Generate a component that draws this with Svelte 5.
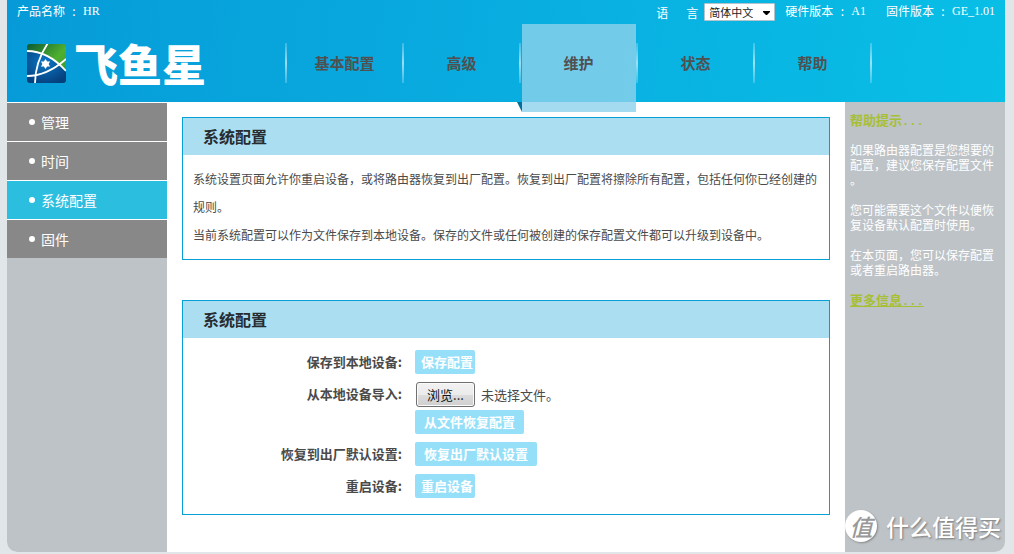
<script>
  let language = $state('zh-CN');
  let fileName = $state('');
  let fileInput;

  const nav = ['基本配置', '高级', '维护', '状态', '帮助'];
  const activeNav = '维护';
  const menu = ['管理', '时间', '系统配置', '固件'];
  const activeMenu = '系统配置';
  const help = [
    '如果路由器配置是您想要的配置，建议您保存配置文件。',
    '您可能需要这个文件以便恢复设备默认配置时使用。',
    '在本页面，您可以保存配置或者重启路由器。'
  ];

  function onFile(event) {
    fileName = event.currentTarget.files[0]?.name ?? '';
  }
</script>

{#snippet info(name, value)}
  <span class="info"><span>{name}</span><span class="colon">:</span><span class="latin">{value}</span></span>
{/snippet}

<div class="page">
  <header>
    <div class="top">
      {@render info('产品名称', 'HR')}
      <div class="top-right">
        <label class="lang" for="language"><span>语</span><span>言</span></label>
        <span class="select-wrap">
          <select id="language" bind:value={language}>
            <option value="zh-CN">简体中文</option>
            <option value="en">English</option>
          </select>
          <svg class="arrow" viewBox="0 0 7 4" aria-hidden="true"><path d="M0 0h7v1L4 4H3L0 1z" /></svg>
        </span>
        <div class="versions">
          {@render info('硬件版本', 'A1')}
          {@render info('固件版本', 'GE_1.01')}
        </div>
      </div>
    </div>
    <div class="bar">
      <a class="logo" href="#home">
        <svg viewBox="0 0 39 39" aria-hidden="true">
          <defs>
            <clipPath id="tile"><rect width="39" height="39" rx="3" /></clipPath>
            <linearGradient id="green" x1="0" y1="0" x2="1" y2="1">
              <stop offset="0" stop-color="#0c5a32" />
              <stop offset=".55" stop-color="#4fb02f" />
              <stop offset="1" stop-color="#2f8f35" />
            </linearGradient>
            <radialGradient id="blue" cx=".45" cy=".35" r=".7">
              <stop offset="0" stop-color="#0c78c4" />
              <stop offset="1" stop-color="#063f7d" />
            </radialGradient>
          </defs>
          <g clip-path="url(#tile)">
            <rect width="39" height="39" fill="url(#green)" />
            <path d="M0 7Q20 7 32 20L39 27V39H0z" fill="url(#blue)" />
            <path d="M0 7Q21 7 39 27M0 32Q20 32 39 15M21-1Q8 18 8 40" fill="none" stroke="#fff" stroke-width="1.8" />
            <path d="m18.500 15 1.600 2.500h3l-1.500 2.500 1.500 2.500h-3L18.500 25l-1.600-2.500h-3l1.500-2.500-1.500-2.500h3z" fill="#fff" />
          </g>
        </svg>
        <span>飞鱼星</span>
      </a>
      <nav>
        {#each nav as item}
          <a href="#{item}" class:active={item === activeNav}>{item}</a>
        {/each}
      </nav>
    </div>
  </header>

  <div class="columns">
    <aside class="side">
      <ul>
        {#each menu as item}
          <li><a href="#{item}" class:active={item === activeMenu}>{item}</a></li>
        {/each}
      </ul>
    </aside>

    <main>
      <section>
        <h2>系统配置</h2>
        <div class="text">
          <p>系统设置页面允许你重启设备，或将路由器恢复到出厂配置。恢复到出厂配置将擦除所有配置，包括任何你已经创建的规则。</p>
          <p>当前系统配置可以作为文件保存到本地设备。保存的文件或任何被创建的保存配置文件都可以升级到设备中。</p>
        </div>
      </section>

      <section>
        <h2>系统配置</h2>
        <form onsubmit={(e) => e.preventDefault()}>
          <label for="save">保存到本地设备:</label>
          <div><button id="save" type="button" class="action short">保存配置</button></div>
          <label for="browse">从本地设备导入:</label>
          <div class="stack">
            <div class="file">
              <button id="browse" type="button" class="browse" onclick={() => fileInput.click()}>浏览...</button>
              <span>{fileName || '未选择文件。'}</span>
              <input type="file" hidden bind:this={fileInput} onchange={onFile} />
            </div>
            <button type="submit" class="action">从文件恢复配置</button>
          </div>
          <label for="reset">恢复到出厂默认设置:</label>
          <div><button id="reset" type="button" class="action">恢复出厂默认设置</button></div>
          <label for="reboot">重启设备:</label>
          <div><button id="reboot" type="button" class="action short">重启设备</button></div>
        </form>
      </section>
    </main>

    <aside class="help">
      <h3>帮助提示<span class="dots">...</span></h3>
      {#each help as line}
        <p>{line}</p>
      {/each}
      <a href="#more">更多信息<span class="dots">...</span></a>
    </aside>
  </div>

  <div class="mark"><span class="disc">值</span><span>什么值得买</span></div>
</div>

<style>
  :global(body) {
    background: #e1e6e9;
  }
  .page {
    position: relative;
    margin: 0 9px 2px 7px;
    font: 12px/15px 'Noto Sans CJK SC', sans-serif;
    color: #4a4a4a;
    text-spacing-trim: space-all;
  }
  a {
    color: inherit;
    text-decoration: none;
  }
  h2, h3, p, ul {
    margin: 0;
    padding: 0;
  }
  button, select {
    font-family: inherit;
    margin: 0;
  }

  header {
    background: linear-gradient(98deg, #069bd8, #09ade0 50%, #08bfe6);
    color: #fff;
    height: 102px;
  }
  .top {
    display: flex;
    justify-content: space-between;
    align-items: center;
    height: 24px;
    padding: 0 10px;
  }
  .info {
    display: inline-flex;
    gap: 6px;
    line-height: 24px;
    height: 26px;
  }
  .colon {
    width: 6px;
    text-align: center;
  }
  .latin {
    font-family: 'Liberation Serif', serif;
  }
  .top-right {
    display: flex;
    align-items: center;
  }
  .lang {
    display: flex;
    gap: 18px;
    margin-right: 6px;
  }
  .select-wrap {
    position: relative;
    display: flex;
    margin-right: 10px;
  }
  select {
    appearance: none;
    width: 71px;
    height: 18px;
    padding: 0 0 0 4px;
    border: 1px solid #b5c3cc;
    border-radius: 1px;
    background: #fff;
    color: #222;
    font-size: 11px;
    line-height: 16px;
  }
  .arrow {
    position: absolute;
    right: 5px;
    top: 8px;
    width: 7px;
    height: 4px;
    pointer-events: none;
  }
  .versions {
    display: flex;
    gap: 20px;
  }
  .bar {
    display: flex;
    align-items: flex-start;
  }
  .logo {
    display: flex;
    align-items: center;
    gap: 8px;
    width: 258px;
    height: 78px;
    padding-left: 20px;
    font-size: 44px;
    font-weight: 900;
    line-height: 48px;
  }
  .logo svg {
    width: 39px;
    height: 39px;
  }
  nav {
    display: flex;
    background: linear-gradient(#fff3, #fff9 50%, #fff3) right 19px / 2px 40px no-repeat;
    padding-right: 2px;
  }
  nav a {
    position: relative;
    width: 115px;
    height: 78px;
    padding-left: 2px;
    background: linear-gradient(#fff3, #fff9 50%, #fff3) left 19px / 2px 40px no-repeat;
    color: #505050;
    font-size: 15px;
    font-weight: 700;
    line-height: 78px;
    text-align: center;
  }
  nav a.active::before {
    content: '';
    position: absolute;
    inset: 0 0 -10px 3px;
    background: #8ed2ec;
    opacity: .8;
    z-index: -1;
  }
  nav a.active::after {
    content: '';
    position: absolute;
    left: -2px;
    top: 78px;
    width: 5px;
    height: 10px;
    background: #056f97;
    clip-path: polygon(0 0, 100% 0, 100% 100%);
  }
  nav a.active {
    z-index: 1;
  }

  .columns {
    display: grid;
    grid-template-columns: 160px 1fr 160px;
    background: #fff;
    border-radius: 0 0 10px 10px;
    overflow: hidden;
  }
  .side, .help {
    background: #bec3c7;
  }
  .side ul {
    list-style: none;
  }
  .side li {
    border-top: 1px solid #fff;
  }
  .side a {
    display: flex;
    align-items: center;
    gap: 6px;
    height: 38px;
    padding-left: 22px;
    background: #888;
    color: #fff;
    font-size: 14px;
    line-height: 20px;
  }
  .side a::before {
    content: '';
    width: 6px;
    height: 6px;
    border-radius: 50%;
    background: #fff;
  }
  .side a.active {
    background: #2bbedf;
  }

  main {
    display: flex;
    flex-direction: column;
    gap: 40px;
    padding: 15px 15px 37px;
  }
  section {
    border: 1px solid #06a0d6;
  }
  h2 {
    padding-left: 20px;
    background: #abdef1;
    color: #262c30;
    font-size: 16px;
    line-height: 37px;
  }
  .text {
    padding: 10px;
    line-height: 28px;
  }
  form {
    display: grid;
    grid-template-columns: 219px 1fr;
    gap: 8px 13px;
    padding: 12px 0 16px;
  }
  form > label {
    font-size: 13px;
    font-weight: 700;
    line-height: 24px;
    text-align: right;
  }
  form > div {
    display: flex;
  }
  form > .stack {
    flex-direction: column;
    align-items: flex-start;
    gap: 3px;
  }
  .action {
    height: 24px;
    padding: 0 9px;
    border: 0;
    border-radius: 2px;
    background: #96dff9;
    color: #fff;
    font-size: 13px;
    font-weight: 700;
    line-height: 24px;
  }
  .action.short {
    padding: 0 2px 0 6px;
  }
  .file {
    display: flex;
    align-items: center;
    gap: 6px;
    padding-left: 1px;
    font-size: 13px;
  }
  .browse {
    width: 59px;
    height: 25px;
    padding: 0;
    border: 1px solid #707070;
    border-radius: 3px;
    box-shadow: inset 0 0 0 1px #fafafa;
    background: linear-gradient(#f2f2f2, #ebebeb 50%, #dddddd 50%, #cfcfcf);
    color: #111;
    font-size: 13px;
  }

  .help {
    padding: 10px 10px 0 5px;
    color: #fff;
    line-break: anywhere;
  }
  .help h3, .help a {
    color: #a7bf34;
    font-size: 13px;
    font-weight: 700;
    line-height: 15px;
  }
  .help p {
    margin: 15px 0;
  }
  .help a {
    text-decoration: underline;
  }
  .dots {
    font-family: 'Liberation Mono', monospace;
    font-size: 12px;
    line-height: 1px;
  }

  .mark {
    position: absolute;
    right: 4px;
    bottom: 10px;
    display: flex;
    align-items: center;
    gap: 9px;
    color: #fff;
    font-size: 23px;
    font-weight: 500;
    line-height: 32px;
    text-shadow: 1px 1px 2px #777;
  }
  .disc {
    width: 32px;
    border-radius: 50%;
    background: #fff;
    box-shadow: 1px 1px 2px #888;
    color: #999;
    text-align: center;
    text-shadow: none;
    font-style: italic;
  }
</style>
